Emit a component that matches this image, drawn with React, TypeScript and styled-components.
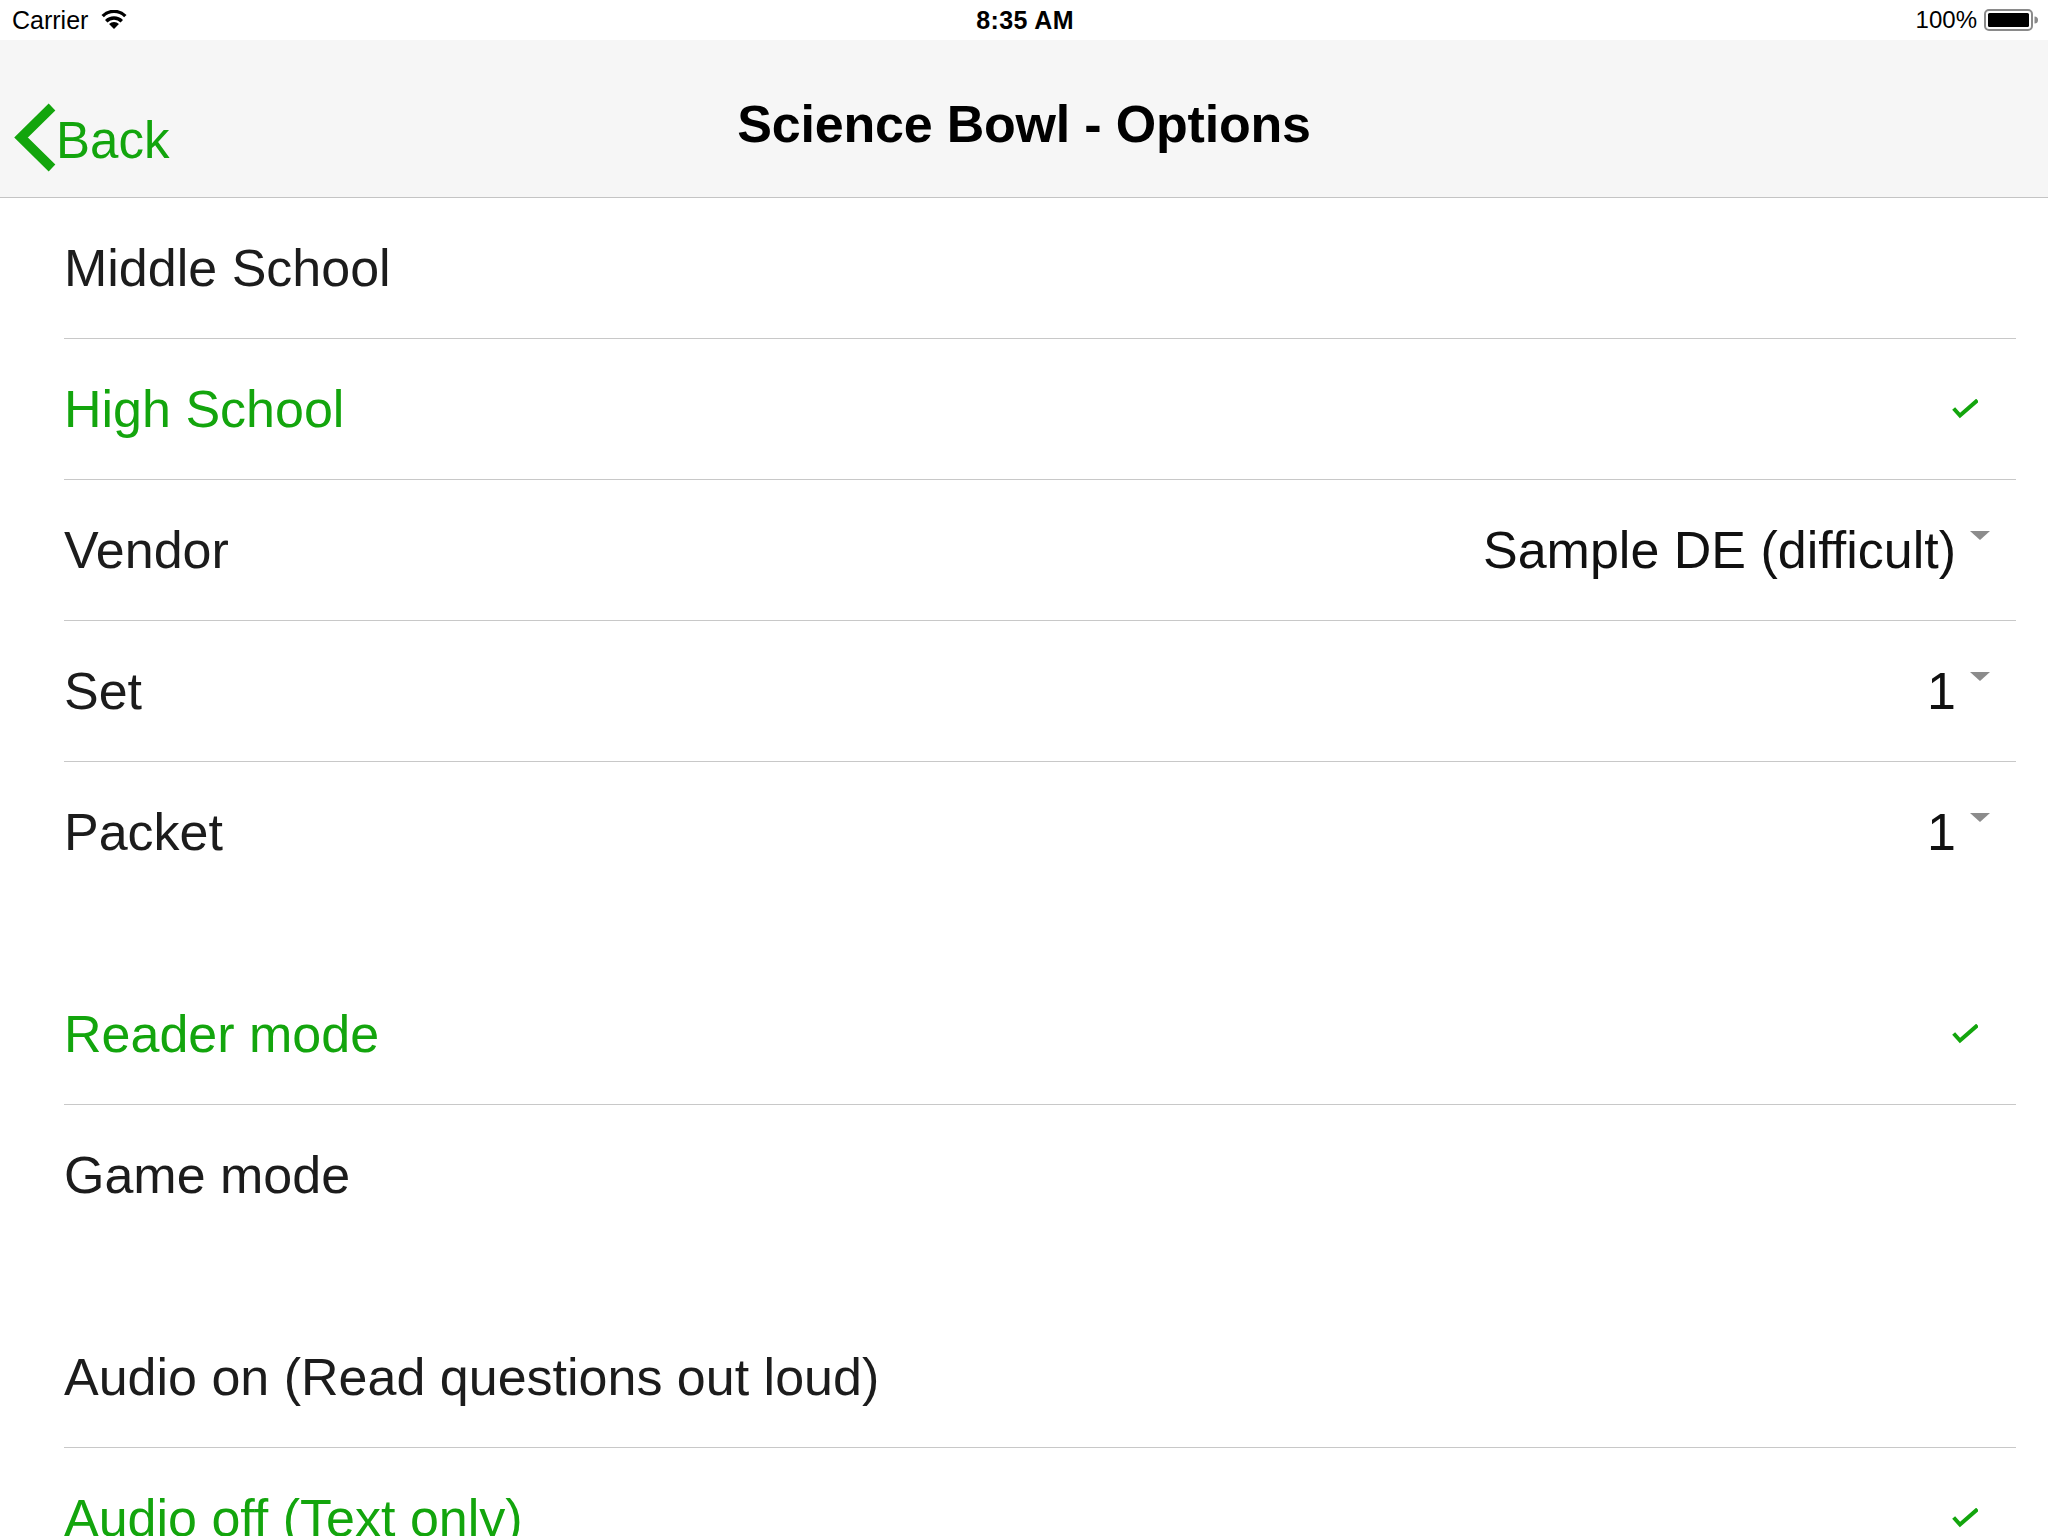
import React from "react";
import styled, { createGlobalStyle } from "styled-components";

const GREEN = "#13a50d";

const GlobalStyle = createGlobalStyle`
  html, body {
    margin: 0;
    padding: 0;
    background: #ffffff;
    font-family: "Liberation Sans", Arial, Helvetica, sans-serif;
    overflow: hidden;
  }
  * { box-sizing: border-box; }
`;

const Screen = styled.div`
  width: 2048px;
  min-height: 1536px;
  background: #ffffff;
  display: flex;
  flex-direction: column;
`;

const StatusBar = styled.div`
  height: 40px;
  display: grid;
  grid-template-columns: 1fr auto 1fr;
  align-items: center;
  padding: 0 10px 0 12px;
  background: #ffffff;
  color: #000;
`;

const StatusLeft = styled.div`
  display: flex;
  align-items: center;
  gap: 12px;
  font-size: 25px;
`;

const StatusTime = styled.div`
  font-size: 25px;
  font-weight: 700;
  letter-spacing: 0.4px;
`;

const StatusRight = styled.div`
  justify-self: end;
  display: flex;
  align-items: center;
  gap: 7px;
  font-size: 24px;
`;

const NavBar = styled.div`
  height: 158px;
  background: #f6f6f6;
  border-bottom: 1px solid #c4c4c4;
  display: grid;
  grid-template-columns: 1fr auto 1fr;
  align-items: start;
`;

const BackButton = styled.div`
  display: flex;
  align-items: center;
  margin-top: 62px;
  padding-left: 13px;
  color: ${GREEN};
  font-size: 51px;
  line-height: 50px;
`;

const BackLabel = styled.span`
  margin-left: -1px;
  margin-top: 8px;
`;

const Title = styled.div`
  padding-top: 58px;
  font-size: 52px;
  line-height: 52px;
  font-weight: 700;
  color: #000;
  letter-spacing: -0.2px;
`;

const Section = styled.div<{ $gap: number }>`
  margin-top: ${(p) => p.$gap}px;
  display: flex;
  flex-direction: column;
`;

const Row = styled.div<{ $last?: boolean }>`
  height: ${(p) => (p.$last ? 140 : 141)}px;
  margin: 0 32px 0 64px;
  border-bottom: ${(p) => (p.$last ? "none" : "1px solid #c8c8c8")};
  display: flex;
  align-items: center;
  justify-content: space-between;
`;

const Label = styled.span<{ $selected?: boolean }>`
  font-size: 52px;
  line-height: 60px;
  color: ${(p) => (p.$selected ? GREEN : "#1c1c1c")};
  white-space: nowrap;
`;

const Picker = styled.div`
  display: flex;
  align-items: center;
  margin-right: 26px;
`;

const PickerValue = styled.span`
  font-size: 52px;
  line-height: 60px;
  color: #111;
`;

const Caret = styled.span`
  width: 0;
  height: 0;
  margin-left: 14px;
  margin-bottom: 30px;
  border-left: 10px solid transparent;
  border-right: 10px solid transparent;
  border-top: 9px solid #8c8c8c;
`;

const CheckIcon = styled.svg`
  width: 26px;
  height: 20px;
  margin-right: 38px;
`;

const Check = () => (
  <CheckIcon viewBox="0 0 26 20">
    <polyline
      points="3,11 8,16.5 24,2.5"
      fill="none"
      stroke={GREEN}
      strokeWidth="4"
      strokeLinecap="square"
      strokeLinejoin="miter"
    />
  </CheckIcon>
);

const Wifi = () => (
  <svg width="28" height="20" viewBox="0 0 28 20">
    <path d="M14 19 L9.05 14.05 A7 7 0 0 1 18.95 14.05 Z" fill="#000" />
    <path
      d="M6.22 11.22 A11 11 0 0 1 21.78 11.22"
      fill="none"
      stroke="#000"
      strokeWidth="3.4"
    />
    <path
      d="M2.68 7.68 A16 16 0 0 1 25.32 7.68"
      fill="none"
      stroke="#000"
      strokeWidth="3.4"
      transform="translate(0,-1.6)"
    />
  </svg>
);

const Battery = () => (
  <svg width="54" height="22" viewBox="0 0 54 22">
    <rect x="1" y="1" width="47" height="20" rx="4" ry="4" fill="none" stroke="#8a8a8a" strokeWidth="2" />
    <rect x="4" y="4" width="41" height="14" rx="1.5" fill="#000" />
    <path d="M50.5 7.5 A3.5 3.5 0 0 1 50.5 14.5 Z" fill="#8a8a8a" />
  </svg>
);

const ChevronIcon = styled.svg`
  width: 44px;
  height: 70px;
  flex-shrink: 0;
`;

const Chevron = () => (
  <ChevronIcon viewBox="0 0 44 70">
    <polyline
      points="39,5 8,35.5 39,66"
      fill="none"
      stroke={GREEN}
      strokeWidth="9.5"
      strokeLinejoin="miter"
      strokeLinecap="butt"
    />
  </ChevronIcon>
);

type Item =
  | { kind: "option"; label: string; selected?: boolean }
  | { kind: "picker"; label: string; value: string };

const sections: { gap: number; items: Item[] }[] = [
  {
    gap: 0,
    items: [
      { kind: "option", label: "Middle School" },
      { kind: "option", label: "High School", selected: true },
      { kind: "picker", label: "Vendor", value: "Sample DE (difficult)" },
      { kind: "picker", label: "Set", value: "1" },
      { kind: "picker", label: "Packet", value: "1" },
    ],
  },
  {
    gap: 62,
    items: [
      { kind: "option", label: "Reader mode", selected: true },
      { kind: "option", label: "Game mode" },
    ],
  },
  {
    gap: 62,
    items: [
      { kind: "option", label: "Audio on (Read questions out loud)" },
      { kind: "option", label: "Audio off (Text only)", selected: true },
    ],
  },
];

export default function App() {
  return (
    <>
      <GlobalStyle />
      <Screen>
        <StatusBar>
          <StatusLeft>
            <span>Carrier</span>
            <Wifi />
          </StatusLeft>
          <StatusTime>8:35 AM</StatusTime>
          <StatusRight>
            <span>100%</span>
            <Battery />
          </StatusRight>
        </StatusBar>
        <NavBar>
          <BackButton>
            <Chevron />
            <BackLabel>Back</BackLabel>
          </BackButton>
          <Title>Science Bowl - Options</Title>
          <div />
        </NavBar>
        {sections.map((section, si) => (
          <Section key={si} $gap={section.gap}>
            {section.items.map((item, i) => {
              const last = i === section.items.length - 1;
              if (item.kind === "picker") {
                return (
                  <Row key={i} $last={last}>
                    <Label>{item.label}</Label>
                    <Picker>
                      <PickerValue>{item.value}</PickerValue>
                      <Caret />
                    </Picker>
                  </Row>
                );
              }
              return (
                <Row key={i} $last={last}>
                  <Label $selected={item.selected}>{item.label}</Label>
                  {item.selected && <Check />}
                </Row>
              );
            })}
          </Section>
        ))}
      </Screen>
    </>
  );
}
